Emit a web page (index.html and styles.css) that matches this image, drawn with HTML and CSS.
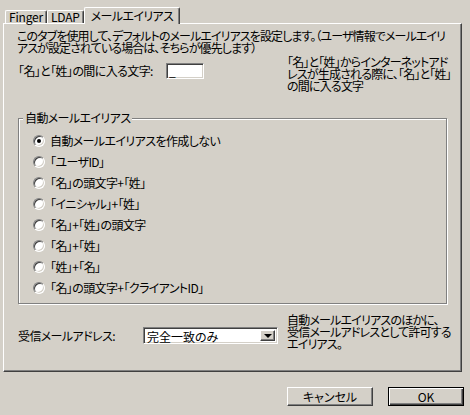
FILE: index.html
```html
<!DOCTYPE html>
<html lang="ja">
<head>
    <meta charset="UTF-8">
    <title>メールエイリアス</title>
    <link rel="stylesheet" href="styles.css">
</head>
<body>
    <div class="dialog">
        <div class="tabs">
            <div class="tab">Finger</div>
            <div class="tab">LDAP</div>
            <div class="tab active">メールエイリアス</div>
        </div>
        <div class="panel">
            <p class="intro">このタブを使用して、デフォルトのメールエイリアスを設定します。（ユーザ情報でメールエイリ<br>アスが設定されている場合は、そちらが優先します）</p>

            <div class="field-row sep-row">
                <div class="field">
                    <label for="separator">「名」と「姓」の間に入る文字:</label>
                    <input id="separator" class="textbox" type="text" value="_">
                </div>
                <p class="note">「名」と「姓」からインターネットアド<br>レスが生成される際に、「名」と「姓」<br>の間に入る文字</p>
            </div>

            <fieldset class="group">
                <legend>自動メールエイリアス</legend>
                <ul class="options">
                    <li class="option"><span class="radio checked"></span>自動メールエイリアスを作成しない</li>
                    <li class="option"><span class="radio"></span>「ユーザID」</li>
                    <li class="option"><span class="radio"></span>「名」の頭文字+「姓」</li>
                    <li class="option"><span class="radio"></span>「イニシャル」+「姓」</li>
                    <li class="option"><span class="radio"></span>「名」+「姓」の頭文字</li>
                    <li class="option"><span class="radio"></span>「名」+「姓」</li>
                    <li class="option"><span class="radio"></span>「姓」+「名」</li>
                    <li class="option"><span class="radio"></span>「名」の頭文字+「クライアントID」</li>
                </ul>
            </fieldset>

            <div class="field-row addr-row">
                <div class="field">
                    <label>受信メールアドレス:</label>
                    <div class="combo">
                        <span class="combo-value">完全一致のみ</span>
                        <span class="combo-btn"><span class="arrow"></span></span>
                    </div>
                </div>
                <p class="note">自動メールエイリアスのほかに、<br>受信メールアドレスとして許可する<br>エイリアス。</p>
            </div>
        </div>
        <div class="buttons">
            <button class="btn">キャンセル</button>
            <button class="btn default">OK</button>
        </div>
    </div>
</body>
</html>
```

FILE: styles.css
```css
body {
    margin: 0;
    background-color: #d4d0c8;
    font-family: "Noto Sans CJK JP", sans-serif;
    font-size: 12px;
    font-feature-settings: "palt";
    letter-spacing: -0.6px;
    color: #000;
}
.dialog {
    width: 470px;
    height: 415px;
}

/* tabs */
.tabs {
    display: flex;
    align-items: flex-end;
    height: 16px;
    padding: 7px 0 0 5px;
}
.tab {
    box-sizing: border-box;
    height: 13px;
    line-height: 12px;
    padding: 0 3px;
    letter-spacing: -0.2px;
    border: 1px solid;
    border-color: #fff #404040 transparent #fff;
    border-bottom: none;
    border-radius: 2px 2px 0 0;
    box-shadow: inset -1px 0 #808080;
}
.tab.active {
    height: 17px;
    line-height: 15px;
    margin-bottom: -1px;
    padding: 0 6px;
    letter-spacing: -0.6px;
    position: relative;
    z-index: 1;
    background-color: #d4d0c8;
}

/* tab page */
.panel {
    box-sizing: border-box;
    width: 459px;
    height: 349px;
    margin-left: 3px;
    border: 1px solid;
    border-color: #fff #404040 #404040 #fff;
    box-shadow: inset -1px -1px #808080;
}
.intro {
    margin: 6px 0 0 13px;
    line-height: 12px;
    letter-spacing: -0.9px;
    white-space: nowrap;
}
.field-row {
    display: grid;
    grid-template-columns: 283px 1fr;
}
.field {
    display: flex;
    align-items: center;
    padding-left: 14px;
}
.note {
    margin: 0;
    line-height: 12px;
    letter-spacing: -0.8px;
    white-space: nowrap;
}
.sep-row {
    margin-top: 2px;
}
.sep-row .field {
    align-self: start;
    padding-top: 6px;
}
.sep-row label {
    width: 148px;
    flex: none;
    white-space: nowrap;
}
.textbox {
    box-sizing: border-box;
    width: 38px;
    height: 16px;
    padding: 0 2px;
    font: inherit;
    line-height: 12px;
    background: #fff;
    border: 1px solid;
    border-color: #808080 #fff #fff #808080;
    box-shadow: inset 1px 1px #404040, inset -1px -1px #d4d0c8;
    outline: none;
}

/* group box */
.group {
    box-sizing: border-box;
    width: 429px;
    margin: 20px 0 0 14px;
    padding: 0;
    min-width: 0;
    border: 1px solid #808080;
    box-shadow: inset 1px 1px #fff, 1px 1px #fff;
}
.group legend {
    margin-left: 4px;
    padding: 0 2px;
    line-height: 12px;
    background-color: #d4d0c8;
}
.options {
    list-style: none;
    margin: 0;
    padding: 6px 0 5px 14px;
}
.option {
    display: flex;
    align-items: center;
    gap: 5px;
    height: 21px;
    white-space: nowrap;
}
.radio {
    box-sizing: border-box;
    width: 12px;
    height: 12px;
    display: flex;
    align-items: center;
    justify-content: center;
    border-radius: 50%;
    background: #fff;
    border: 1px solid;
    border-color: #808080 #fff #fff #808080;
    box-shadow: inset 1px 1px #404040, inset -1px -1px #d4d0c8;
}
.radio.checked::after {
    content: "";
    width: 4px;
    height: 4px;
    border-radius: 50%;
    background: #000;
}

/* address row */
.addr-row {
    margin-top: 10px;
}
.addr-row .field {
    align-self: start;
    padding-top: 13px;
}
.addr-row label {
    width: 125px;
    flex: none;
    white-space: nowrap;
}
.combo {
    box-sizing: border-box;
    display: flex;
    align-items: stretch;
    width: 135px;
    height: 17px;
    padding: 2px;
    background: #fff;
    border: 1px solid;
    border-color: #808080 #fff #fff #808080;
    box-shadow: inset 1px 1px #404040, inset -1px -1px #d4d0c8;
}
.combo-value {
    flex: 1;
    line-height: 13px;
    padding-left: 1px;
    letter-spacing: 0;
    white-space: nowrap;
}
.combo-btn {
    box-sizing: border-box;
    width: 15px;
    display: flex;
    align-items: center;
    justify-content: center;
    background: #d4d0c8;
    border: 1px solid;
    border-color: #fff #404040 #404040 #fff;
    box-shadow: inset -1px -1px #808080;
}
.arrow {
    width: 0;
    height: 0;
    border-left: 4px solid transparent;
    border-right: 4px solid transparent;
    border-top: 4px solid #000;
}

/* dialog buttons */
.buttons {
    display: flex;
    justify-content: flex-end;
    gap: 15px;
    margin-top: 15px;
    padding-right: 6px;
}
.btn {
    box-sizing: border-box;
    width: 86px;
    height: 19px;
    padding: 0;
    font: inherit;
    line-height: 15px;
    color: #000;
    background-color: #d4d0c8;
    border: 1px solid;
    border-color: #fff #404040 #404040 #fff;
    box-shadow: inset -1px -1px #808080;
}
.btn.default {
    width: 76px;
    border-color: #000;
    box-shadow: inset 1px 1px #fff, inset -1px -1px #404040, inset -2px -2px #808080;
}
```
